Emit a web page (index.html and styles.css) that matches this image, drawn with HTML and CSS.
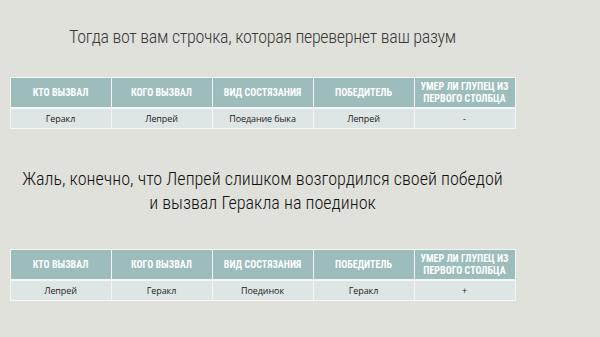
FILE: index.html
```html
<!DOCTYPE html>
<html lang="ru">
<head>
<meta charset="utf-8">
<link rel="stylesheet" href="styles.css">
</head>
<body>
<div class="slide">
  <h1 class="title">Тогда вот вам строчка, которая перевернет ваш разум</h1>
  <table class="grid grid-first">
    <thead>
      <tr>
        <th>КТО ВЫЗВАЛ</th>
        <th>КОГО ВЫЗВАЛ</th>
        <th>ВИД СОСТЯЗАНИЯ</th>
        <th>ПОБЕДИТЕЛЬ</th>
        <th>УМЕР ЛИ ГЛУПЕЦ ИЗ ПЕРВОГО СТОЛБЦА</th>
      </tr>
    </thead>
    <tbody>
      <tr>
        <td>Геракл</td>
        <td>Лепрей</td>
        <td>Поедание быка</td>
        <td>Лепрей</td>
        <td>-</td>
      </tr>
    </tbody>
  </table>
  <h2 class="subtitle">Жаль, конечно, что Лепрей слишком возгордился своей победой<br>и вызвал Геракла на поединок</h2>
  <table class="grid grid-second">
    <thead>
      <tr>
        <th>КТО ВЫЗВАЛ</th>
        <th>КОГО ВЫЗВАЛ</th>
        <th>ВИД СОСТЯЗАНИЯ</th>
        <th>ПОБЕДИТЕЛЬ</th>
        <th>УМЕР ЛИ ГЛУПЕЦ ИЗ ПЕРВОГО СТОЛБЦА</th>
      </tr>
    </thead>
    <tbody>
      <tr>
        <td>Лепрей</td>
        <td>Геракл</td>
        <td>Поединок</td>
        <td>Геракл</td>
        <td>+</td>
      </tr>
    </tbody>
  </table>
</div>
</body>
</html>
```
FILE: styles.css
```css
html, body {
  margin: 0;
  padding: 0;
  background: #e1e1dc;
}
.slide {
  width: 525px;
  height: 337px;
  display: flex;
  flex-direction: column;
  align-items: center;
  overflow: hidden;
  font-family: "Roboto Condensed", "Open Sans", "Liberation Sans", sans-serif;
}
.title {
  margin: 23px 0 0 0;
  font-size: 18px;
  line-height: 28px;
  font-weight: 300;
  letter-spacing: -0.3px;
  color: #3a3a3a;
  text-align: center;
  white-space: nowrap;
}
.subtitle {
  margin: 38px 0 0 0;
  font-size: 18.1px;
  line-height: 24px;
  font-weight: 300;
  color: #111111;
  text-align: center;
  white-space: nowrap;
}
.grid {
  width: 506px;
  border-collapse: collapse;
  table-layout: fixed;
}
.grid-first {
  margin-top: 26px;
}
.grid-second {
  margin-top: 34px;
}
.grid th, .grid td {
  border: 1px solid #f4f6f5;
  text-align: center;
  padding: 0 2px;
}
.grid th {
  background: #9cbdbc;
  color: #ffffff;
  font-size: 10px;
  font-weight: 700;
  line-height: 12px;
  height: 29px;
}
.grid thead tr {
  border-bottom: 2px solid #f4f6f5;
}
.grid td {
  background: #dee6e5;
  color: #222;
  font-family: "Open Sans", "Liberation Sans", sans-serif;
  font-size: 9px;
  line-height: 12px;
  height: 19px;
  letter-spacing: -0.1px;
}
```
